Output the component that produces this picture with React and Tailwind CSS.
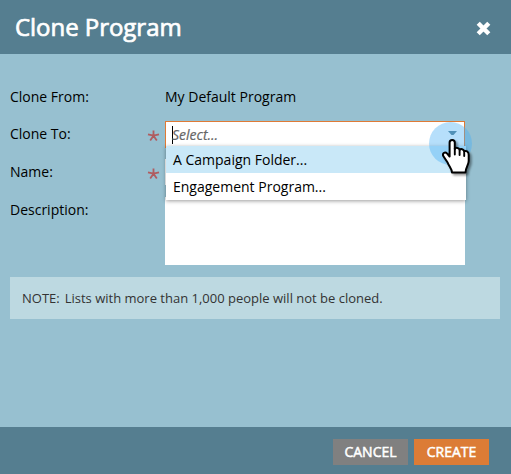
const options = ["A Campaign Folder...", "Engagement Program..."];

function Label({ children }) {
  return <div className="w-[155px] shrink-0">{children}</div>;
}

function Required() {
  return (
    <svg className="absolute left-[137px] top-[9px]" width="13" height="12" viewBox="0 0 13 12" stroke="#b05c60" strokeWidth="1.8" fill="none">
      <path d="M6.500 5.700V.5M6.500 5.700L1 4.400M6.500 5.700l5.500-1.300M6.500 5.700L3.200 10.500M6.500 5.700l3.300 4.800" />
    </svg>
  );
}

function HandCursor() {
  return (
    <svg className="absolute left-[440px] top-[137px] drop-shadow-[2px_2px_1px_rgba(0,0,0,0.4)]" width="32" height="39" viewBox="0 0 32 39">
      <path
        d="M9.600 19.500V5.500C9.600 2 14.800 2 14.800 5.500V12C15.600 10.300 19 10.500 19.600 12.800C20.800 11.500 23.600 12 24.200 14.200C26.400 13.200 28.700 15 28.700 18V24C28.700 28 25.500 30.500 25.500 35.500H12C12 32 9 29.500 7.600 25.500L3.600 19.500C1.700 16.600 4.800 14.200 7.200 16.600Z"
        fill="#fff" stroke="#000" strokeWidth="2" strokeLinejoin="round"
      />
      <path d="M14.800 11.500v6M19.600 13v5M24.200 14.500v4.500" stroke="#000" strokeWidth="1.900" strokeLinecap="round" />
    </svg>
  );
}

export default function App() {
  return (
    <div className="relative flex h-[474px] w-[511px] flex-col overflow-hidden bg-[#97c0d0] font-['Open_Sans',sans-serif] text-[14px] leading-[20px] text-black">
      <header className="flex h-[54px] shrink-0 items-center justify-between bg-[#557e90] pr-[20px] pl-[15px]">
        <h1 className="text-[24px] leading-[32px] tracking-[-0.04px] text-white [-webkit-text-stroke:0.7px_white]">Clone Program</h1>
        <svg className="mt-[2px]" width="15" height="15" viewBox="0 0 15 15" stroke="#fff" strokeWidth="4.400">
          <path d="M2.200 2.200l10.600 10.600M12.800 2.200L2.200 12.800" />
        </svg>
      </header>

      <main className="flex flex-1 flex-col px-[10px] pt-[33px]">
        <div className="flex h-[34px]">
          <Label>Clone From:</Label>
          <span>My Default Program</span>
        </div>
        <div className="relative flex h-[38px]">
          <Label><div className="pt-[3px]">Clone To:</div></Label>
          <Required />
          <div className="flex h-[27px] w-[300px] items-center justify-between border border-[#df7a35] bg-white pr-[7px] pl-[6px]">
            <span className="flex items-center italic text-[#666] [-webkit-text-stroke:0.2px_#666]"><i className="-mr-px h-[18px] w-px bg-black" />Select...</span>
            <svg className="mb-[3px]" width="9" height="4" viewBox="0 0 9 4"><path d="M0 0h9L5.500 4h-2z" fill="#557e90" /></svg>
          </div>
        </div>
        <div className="relative flex h-[38px]">
          <Label><div className="pt-[3px]">Name:</div></Label>
          <Required />
          <div className="h-[26px] w-[300px] bg-white" />
        </div>
        <div className="flex h-[68px]">
          <Label><div className="pt-[3px]">Description:</div></Label>
          <div className="h-[68px] w-[300px] bg-white" />
        </div>
        <div className="mt-[12px] flex h-[42px] w-[490px] items-center bg-[#bdd9e1] pl-[12px] text-[13px] text-[#333]">
          <span className="mr-[5px]">NOTE:</span><span>Lists with more than 1,000 people will not be cloned.</span>
        </div>
      </main>

      <footer className="flex h-[47px] shrink-0 justify-end gap-[6px] bg-[#557e90] pt-[12px] pr-[22px] text-white">
        <button className="h-[26px] w-[75px] bg-[#808080] [-webkit-text-stroke:0.5px_white]">CANCEL</button>
        <button className="h-[26px] w-[75px] bg-[#dc7c36] [-webkit-text-stroke:0.5px_white]">CREATE</button>
      </footer>

      <div className="absolute top-[146px] left-[166px] w-[300px] bg-white shadow-[0_1px_4px_rgba(0,0,0,0.4)]">
        {options.map((option, i) => (
          <div key={option} className={`flex h-[27px] items-center pl-[7px] ${i === 0 ? "bg-[#c9e8f8]" : "bg-white"}`}>{option}</div>
        ))}
      </div>
      <div className="absolute top-[122px] left-[429px] size-[43px] rounded-full bg-[#48b0f5]/40" />
      <HandCursor />
    </div>
  );
}
